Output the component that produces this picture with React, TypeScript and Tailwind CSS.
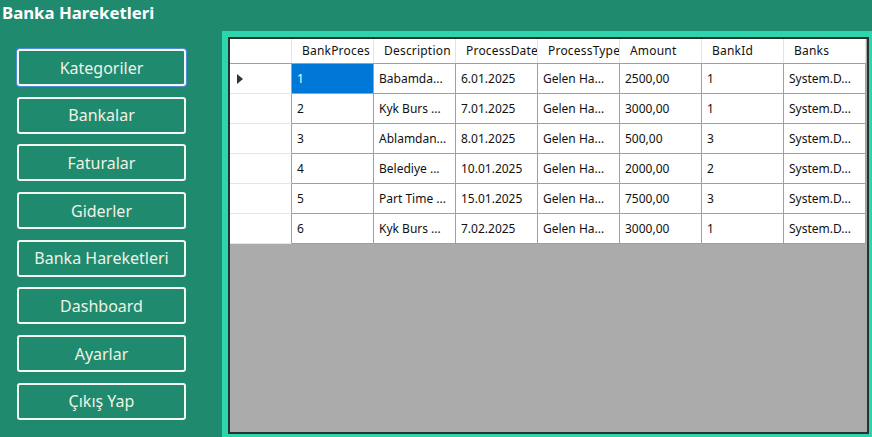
const rows = [
  { id: "1", desc: "Babamda...", date: "6.01.2025", type: "Gelen Ha...", amount: "2500,00", bankId: "1", banks: "System.D..." },
  { id: "2", desc: "Kyk Burs ...", date: "7.01.2025", type: "Gelen Ha...", amount: "3000,00", bankId: "1", banks: "System.D..." },
  { id: "3", desc: "Ablamdan...", date: "8.01.2025", type: "Gelen Ha...", amount: "500,00", bankId: "3", banks: "System.D..." },
  { id: "4", desc: "Belediye ...", date: "10.01.2025", type: "Gelen Ha...", amount: "2000,00", bankId: "2", banks: "System.D..." },
  { id: "5", desc: "Part Time ...", date: "15.01.2025", type: "Gelen Ha...", amount: "7500,00", bankId: "3", banks: "System.D..." },
  { id: "6", desc: "Kyk Burs ...", date: "7.02.2025", type: "Gelen Ha...", amount: "3000,00", bankId: "1", banks: "System.D..." },
];

const columns = ["BankProces", "Description", "ProcessDate", "ProcessType", "Amount", "BankId", "Banks"];

const menu = ["Kategoriler", "Bankalar", "Faturalar", "Giderler", "Banka Hareketleri", "Dashboard", "Ayarlar", "Çıkış Yap"];

export default function App() {
  return (
    <div className="w-[872px] h-[437px] bg-[#208a6f] flex flex-col overflow-hidden font-['Noto_Sans',sans-serif]">
      {/* Title */}
      <div className="h-[31px] pl-[2px] text-[16.8px] leading-[26px] font-bold text-white">
        Banka Hareketleri
      </div>

      <div className="flex flex-1 min-h-0">
        {/* Sidebar */}
        <div className="w-[222px] shrink-0 pt-[18px] pl-[17px] flex flex-col gap-[10.7px]">
          {menu.map((label, i) => (
            <button
              key={label}
              className={
                "w-[169px] h-[37px] rounded-[3px] border-2 border-[#f4f7f1] text-[16px] text-[#eef3e6] leading-none " +
                (i === 0 ? "shadow-[0_0_0_1px_#4d8fd6]" : "")
              }
            >
              {label}
            </button>
          ))}
        </div>

        {/* Grid panel */}
        <div className="flex-1 bg-[#2ed4ac] pt-[6px] pl-[6px] pr-[3px] pb-[3px] flex">
          <div className="flex-1 border-2 border-[#27332f] bg-[#ababab] text-[12px] text-[#111]">
            {/* Header */}
            <div className="flex h-[25px] bg-white border-b border-[#a0a0a0] w-[636px]">
              <div className="w-[62px] shrink-0 border-r border-[#e3e3e3]" />
              {columns.map((c) => (
                <div
                  key={c}
                  className="w-[82px] shrink-0 pl-[10px] pr-px flex items-center overflow-hidden whitespace-nowrap border-r border-[#e3e3e3] tracking-[0.2px]"
                >
                  {c}
                </div>
              ))}
            </div>

            {/* Rows */}
            {rows.map((r, ri) => {
              const cells = [r.id, r.desc, r.date, r.type, r.amount, r.bankId, r.banks];
              return (
                <div key={r.id} className="flex h-[30px] w-[636px]">
                  <div className="w-[62px] shrink-0 bg-white border-b border-r border-[#e6e6e6] border-r-[#a0a0a0] flex items-center pl-[7px]">
                    {ri === 0 && (
                      <svg width="6" height="10" viewBox="0 0 6 10">
                        <path d="M0 0 L6 5 L0 10 Z" fill="#333" />
                      </svg>
                    )}
                  </div>
                  {cells.map((v, ci) => (
                    <div
                      key={ci}
                      className={
                        "w-[82px] shrink-0 pl-[5px] flex items-center overflow-hidden whitespace-nowrap border-r border-b border-[#a0a0a0] " +
                        (ri === 0 && ci === 0 ? "bg-[#0078d7] text-white" : "bg-white")
                      }
                    >
                      {v}
                    </div>
                  ))}
                </div>
              );
            })}
          </div>
        </div>
      </div>
    </div>
  );
}
